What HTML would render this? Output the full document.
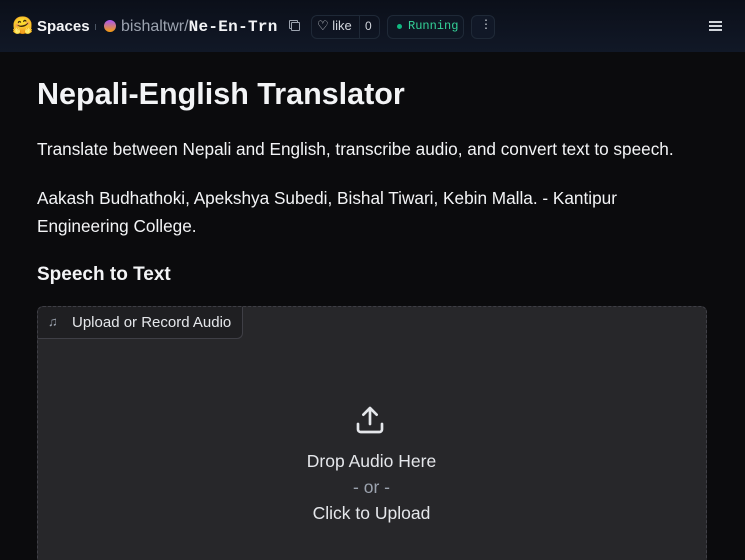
<!DOCTYPE html><html><head><style>
html,body{margin:0;width:745px;height:560px;overflow:hidden}
body{background:#0b0f19;font-family:"Liberation Sans",sans-serif;color:#e5e7eb;position:relative}
.hdr{position:absolute;left:0;top:0;width:745px;height:52px;background:linear-gradient(#0b0f19,#111827)}
.main{position:absolute;left:0;top:52px;width:745px;height:508px;background:#0b0b0d;overflow:hidden}
.t{position:absolute;white-space:nowrap}
.mono{font-family:"Liberation Mono",monospace}
.box{position:absolute;border:1px solid #1f2937;border-radius:6px}
</style></head><body>
<div class="hdr">
<div class="t" style="left:12px;top:16px;font-size:17px">🤗</div>
<div class="t" style="left:37px;top:18px;font-size:15px;font-weight:bold;color:#f3f4f6">Spaces</div>
<div style="position:absolute;left:95px;top:24px;width:1px;height:6px;background:#4b5563"></div>
<div style="position:absolute;left:104px;top:20px;width:12px;height:12px;border-radius:50%;background:linear-gradient(#a855f7,#f59e0b)"></div>
<div class="t" style="left:121px;top:18px;font-size:16px;color:#9ca3af">bishaltwr/<b class="mono" style="color:#f3f4f6;font-size:16px;letter-spacing:0.3px">Ne-En-Trn</b></div>
<div style="position:absolute;left:289px;top:20px;width:7px;height:7px;border:1px solid #9ca3af;border-radius:1px"></div>
<div style="position:absolute;left:291px;top:22px;width:7px;height:7px;border:1px solid #9ca3af;border-radius:1px;background:#0e1320"></div>
<div class="box" style="left:311px;top:15px;width:67px;height:22px"></div>
<div class="t" style="left:317px;top:18px;font-size:13px;color:#d1d5db">♡ like</div>
<div style="position:absolute;left:359px;top:16px;width:1px;height:22px;background:#1f2937"></div>
<div class="t" style="left:365px;top:19px;font-size:12px;color:#d1d5db">0</div>
<div class="box" style="left:387px;top:15px;width:75px;height:22px;background:#0f1623"></div>
<div style="position:absolute;left:397px;top:24px;width:5px;height:5px;border-radius:50%;background:#10b981"></div>
<div class="t mono" style="left:408px;top:19px;font-size:12px;color:#34d399">Running</div>
<div class="box" style="left:471px;top:15px;width:22px;height:22px;background:#111827"></div>
<div class="t" style="left:480px;top:17px;font-size:12px;color:#d1d5db">⋮</div>
<div style="position:absolute;left:709px;top:21px;width:13px;height:2px;background:#d1d5db;box-shadow:0 4px 0 #d1d5db,0 8px 0 #d1d5db"></div>
</div>
<div class="main">
<div class="t" style="left:37px;top:25px;font-size:30.5px;font-weight:bold;color:#f3f4f6">Nepali-English Translator</div>
<div class="t" style="left:37px;top:87px;font-size:17.2px;color:#f3f4f6">Translate between Nepali and English, transcribe audio, and convert text to speech.</div>
<div class="t" style="left:37px;top:132px;font-size:17.2px;color:#f3f4f6;line-height:28px">Aakash Budhathoki, Apekshya Subedi, Bishal Tiwari, Kebin Malla. - Kantipur<br>Engineering College.</div>
<div class="t" style="left:37px;top:212px;font-size:19px;font-weight:bold;color:#f3f4f6">Speech to Text</div>
<div style="position:absolute;left:37px;top:254px;width:668px;height:260px;background:#27272a;border:1px dashed #3f3f46;border-bottom:none;border-radius:6px 6px 0 0"></div>
<div style="position:absolute;left:38px;top:255px;width:204px;height:31px;background:#1f1f22;border-right:1px solid #3f3f46;border-bottom:1px solid #3f3f46;border-radius:6px 0 6px 0"></div>
<div class="t" style="left:48px;top:262px;font-size:13px;color:#9ca3af">♫</div>
<div class="t" style="left:72px;top:262px;font-size:15px;color:#e5e7eb">Upload or Record Audio</div>
<svg style="position:absolute;left:354px;top:352px" width="32" height="32" viewBox="0 0 24 24" fill="none" stroke="#e5e7eb" stroke-width="2" stroke-linecap="round" stroke-linejoin="round"><path d="M21 15v4a2 2 0 0 1-2 2H5a2 2 0 0 1-2-2v-4M17 8l-5-5-5 5M12 3v12"/></svg>
<div class="t" style="left:0;width:743px;text-align:center;top:396px;font-size:17.5px;color:#e5e7eb;line-height:26px">Drop Audio Here<br><span style="color:#9ca3af">- or -</span><br>Click to Upload</div>
</div>
</body></html>
